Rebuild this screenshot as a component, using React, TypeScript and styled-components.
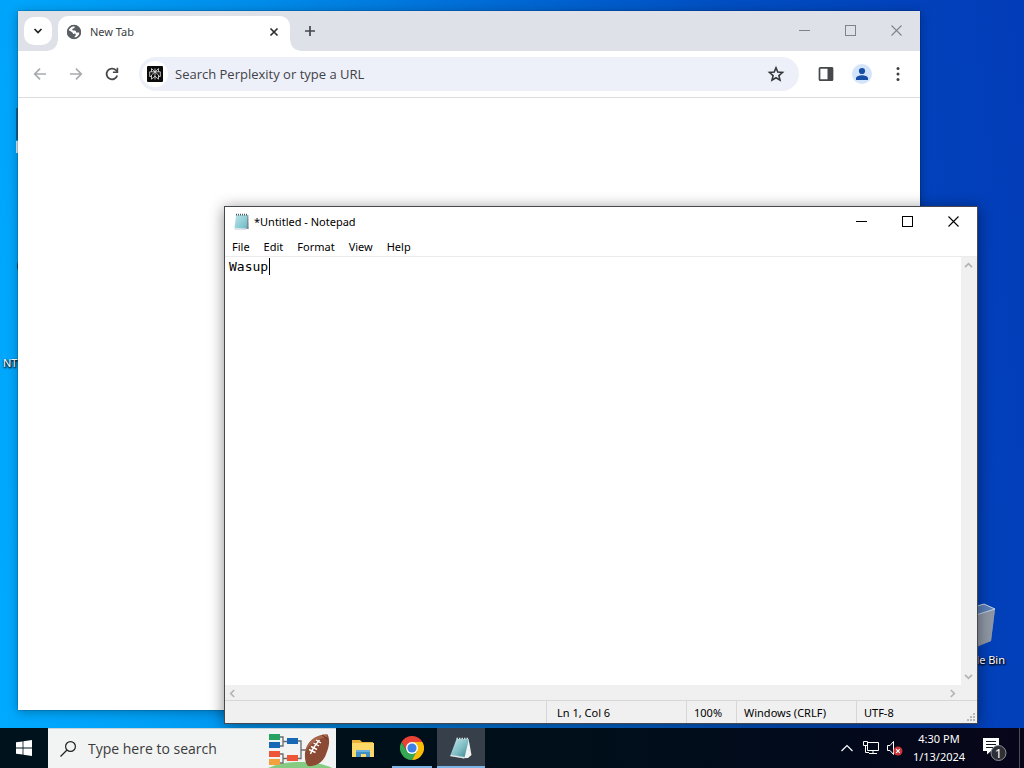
import React from "react";
import styled, { createGlobalStyle } from "styled-components";

const GlobalStyle = createGlobalStyle`
  *, *::before, *::after { box-sizing: border-box; }
  body { margin: 0; font-family: "Noto Sans", "Open Sans", sans-serif; font-size: 11px; color: #000; }
  button, input, textarea { font: inherit; color: inherit; border: 0; padding: 0; margin: 0; background: none; border-radius: 0; }
  button { display: flex; align-items: center; justify-content: center; }
  svg { display: block; flex: none; }
`;

const Screen = styled.div`
  min-height: 100vh;
  display: flex;
  flex-direction: column;
  overflow: hidden;
  background: linear-gradient(84deg, #00aaff 0%, #00a2f8 12%, #008dea 30%, #006dd6 50%, #004fc2 72%, #0241bb 90%, #033cb8 100%);
`;

const Desktop = styled.main`
  flex: 1;
  position: relative;
  overflow: hidden;
`;

const Shortcut = styled.div<{ $top: number; $left?: number; $right?: number }>`
  position: absolute;
  top: ${(p) => p.$top}px;
  ${(p) => (p.$left !== undefined ? `left: ${p.$left}px;` : "")}
  ${(p) => (p.$right !== undefined ? `right: ${p.$right}px;` : "")}
  display: flex;
  flex-direction: column;
  align-items: center;
  gap: 4px;
  color: #fff;
  line-height: 16px;
  text-shadow: 0 1px 2px #000, 1px 1px 2px #000;
`;

const Window = styled.section`
  position: absolute;
  display: flex;
  flex-direction: column;
  background: #fff;
`;

const BrowserWindow = styled(Window)`
  inset: 11px 104px 18px 18px;
  box-shadow: 0 0 1px rgba(0, 0, 0, 0.7), 0 2px 10px rgba(0, 0, 0, 0.3);
`;

const NotepadWindow = styled(Window)`
  inset: 206px 46px 4px 224px;
  border: 1px solid #45494e;
  box-shadow: 0 2px 14px rgba(0, 0, 0, 0.45);
`;

const TabStrip = styled.header`
  height: 40px;
  display: flex;
  align-items: center;
  padding-left: 6px;
  background: #dee2e8;
`;

const TabSearch = styled.button`
  width: 28px;
  height: 28px;
  border-radius: 10px;
  background: #fff;
`;

const Tab = styled.div`
  position: relative;
  align-self: flex-end;
  width: 232px;
  height: 35px;
  margin-left: 6px;
  padding: 0 8px 4px;
  display: flex;
  align-items: center;
  gap: 8px;
  color: #3c4043;
  background: #fff;
  border-radius: 10px 10px 0 0;
  &::before, &::after {
    content: "";
    position: absolute;
    bottom: 0;
    width: 10px;
    height: 10px;
  }
  &::before { left: -10px; background: radial-gradient(circle at 0 0, transparent 9px, #fff 10px); }
  &::after { right: -10px; background: radial-gradient(circle at 100% 0, transparent 9px, #fff 10px); }
`;

const TabTitle = styled.span`
  flex: 1;
`;

const TabButton = styled.button`
  width: 16px;
  height: 16px;
`;

const NewTab = styled.button`
  width: 28px;
  height: 28px;
  margin-left: 6px;
`;

const CaptionButtons = styled.div`
  display: flex;
  align-self: stretch;
  margin-left: auto;
`;

const CaptionButton = styled.button`
  width: 46px;
  padding-right: 1px;
  padding-bottom: 1px;
`;

const Toolbar = styled.div`
  height: 47px;
  display: flex;
  align-items: center;
  padding: 0 4px;
  border-bottom: 1px solid #dcdde1;
  background: #fff;
`;

const ToolButton = styled.button`
  width: 36px;
  height: 36px;
`;

const Omnibox = styled.label`
  flex: 1;
  height: 34px;
  margin: 0 9px;
  padding: 0 14px 0 3px;
  display: flex;
  align-items: center;
  gap: 7px;
  border-radius: 17px;
  background: #eef0f9;
`;

const EngineBadge = styled.span`
  width: 26px;
  height: 26px;
  display: flex;
  align-items: center;
  justify-content: center;
  border-radius: 50%;
  background: #fff;
`;

const OmniInput = styled.input`
  flex: 1;
  min-width: 0;
  height: 26px;
  font-family: "Open Sans", sans-serif;
  font-size: 13px;
  &::placeholder { color: #3f4248; opacity: 1; }
`;

const NotepadTitle = styled.header`
  height: 29px;
  display: flex;
  align-items: center;
  gap: 5px;
  padding-left: 8px;
`;

const MenuBar = styled.nav`
  height: 20px;
  display: flex;
  align-items: center;
`;

const MenuItem = styled.button`
  height: 20px;
  padding: 0 7px;
`;

const EditorArea = styled.div`
  flex: 1;
  display: flex;
  min-height: 0;
  border-top: 1px solid #ebebeb;
  background: #f0f0f0;
`;

const Editor = styled.div`
  flex: 1;
  position: relative;
  display: flex;
  font: 13px/18px "DejaVu Sans Mono", monospace;
  background: #fff;
`;

const TextBox = styled.textarea`
  flex: 1;
  resize: none;
  outline: none;
  padding: 1px 4px 0;
`;

const Caret = styled.span`
  position: absolute;
  top: 1px;
  left: calc(5px + 5ch);
  width: 1px;
  height: 17px;
  background: #000;
`;

const ScrollBar = styled.div<{ $vertical?: boolean }>`
  display: flex;
  justify-content: space-between;
  flex-direction: ${(p) => (p.$vertical ? "column" : "row")};
  ${(p) => (p.$vertical ? "width: 16px; padding-bottom: 1px;" : "height: 15px; padding-right: 17px;")}
  background: #f0f0f0;
`;

const ScrollButton = styled.button`
  width: 15px;
  height: 16px;
`;

const StatusBar = styled.footer`
  position: relative;
  height: 23px;
  display: flex;
  justify-content: flex-end;
  padding-right: 1px;
  border-top: 1px solid #d7d7d7;
  background: #f0f0f0;
`;

const StatusCell = styled.span<{ $width: number; $indent: number }>`
  width: ${(p) => p.$width}px;
  padding-left: ${(p) => p.$indent}px;
  display: flex;
  align-items: center;
  border-left: 1px solid #d7d7d7;
  white-space: nowrap;
`;

const Grip = styled.svg`
  position: absolute;
  right: 1px;
  bottom: 1px;
`;

const Taskbar = styled.footer`
  height: 40px;
  display: flex;
  color: #fff;
  background: linear-gradient(90deg, #00121c 0%, #000f1a 55%, #020a1c 80%, #080519 100%);
`;

const StartButton = styled.button`
  width: 48px;
`;

const SearchBox = styled.label`
  width: 288px;
  margin-right: 3px;
  padding-left: 12px;
  display: flex;
  align-items: center;
  gap: 12px;
  border-top: 1px solid #c9d3da;
  background: #f2f3f3;
`;

const SearchInput = styled.input`
  flex: 1;
  min-width: 0;
  margin-right: -12px;
  height: 30px;
  font-family: "Open Sans", sans-serif;
  font-size: 14px;
  &::placeholder { color: #3b3b3b; opacity: 1; }
`;

const TaskButton = styled.button<{ $running?: boolean; $active?: boolean }>`
  position: relative;
  width: 48px;
  margin-right: 1px;
  background: ${(p) => (p.$active ? "#363f4a" : "none")};
  &::after {
    content: "";
    position: absolute;
    bottom: 0;
    left: ${(p) => (p.$active ? 0 : 4)}px;
    right: ${(p) => (p.$active ? 0 : 4)}px;
    height: 2px;
    background: ${(p) => (p.$running || p.$active ? "#7cb4e6" : "none")};
  }
`;

const Tray = styled.div`
  display: flex;
  margin-left: auto;
  padding-right: 4px;
`;

const TrayButton = styled.button`
  width: 24px;
`;

const Clock = styled.button`
  width: 64px;
  flex-direction: column;
  line-height: 18px;
  white-space: nowrap;
`;

const NoticeButton = styled.button`
  width: 49px;
  border-right: 1px solid #4a4d58;
`;

const MinimizeIcon = () => (
  <svg width="11" height="11" viewBox="0 0 11 11"><path d="M0 5.5h11" stroke="currentColor" /></svg>
);
const MaximizeIcon = () => (
  <svg width="11" height="11" viewBox="0 0 11 11"><rect x=".5" y=".5" width="10" height="10" fill="none" stroke="currentColor" /></svg>
);
const CloseIcon = () => (
  <svg width="11" height="11" viewBox="0 0 11 11"><path d="M.5.5l10 10M10.5.5l-10 10" stroke="currentColor" strokeWidth="1.1" /></svg>
);

const BrowserCaptions = styled(CaptionButtons)`
  color: #808388;
`;

const Captions = ({ as: Group = CaptionButtons }: { as?: React.ElementType }) => (
  <Group>
    <CaptionButton aria-label="Minimize"><MinimizeIcon /></CaptionButton>
    <CaptionButton aria-label="Maximize"><MaximizeIcon /></CaptionButton>
    <CaptionButton aria-label="Close"><CloseIcon /></CaptionButton>
  </Group>
);

const turns = { up: 0, right: 90, down: 180, left: 270 };
const ScrollArrow = ({ dir }: { dir: keyof typeof turns }) => (
  <svg width="9" height="9" viewBox="0 0 9 9">
    <path d="M1 6.2L4.5 2.7 8 6.2" transform={`rotate(${turns[dir]} 4.5 4.5)`} fill="none" stroke="#b4b4b4" strokeWidth="1.7" />
  </svg>
);

const Arrow = ({ flip }: { flip?: boolean }) => (
  <svg width="16" height="16" viewBox="0 0 16 16">
    <path d="M14 8H3M8 2.7L2.7 8 8 13.3" transform={flip ? "rotate(180 8 8)" : undefined} fill="none" stroke="#a9abae" strokeWidth="1.7" />
  </svg>
);

const ReloadIcon = () => (
  <svg width="16" height="16" viewBox="0 0 16 16">
    <path d="M13.2 9.4A5.4 5.4 0 1 1 11.9 4.2L13.6 6" fill="none" stroke="#46484c" strokeWidth="1.8" />
    <path d="M14.2 1.8v5.3H8.9V5.5h3.7V1.8z" fill="#46484c" />
  </svg>
);

const GlobeIcon = () => (
  <svg width="16" height="16" viewBox="0 0 16 16">
    <circle cx="8" cy="8" r="7" fill="#5b5f64" />
    <path d="M8.4 2.1c.6 1.1.2 1.9-.6 2.2-.9.3-1.6.6-1.5 1.4.1 1 1.4.8 2.4.9 1.1.2 1.5.9 1.4 1.9 1 .1 2.2-.1 3.4.2A5.7 5.7 0 0 1 8.6 13.8c-.2-1 .1-1.6.8-2 .6-.5.6-1.7-.3-2-.9-.4-1.8-.3-2.5-1C5.5 7.7 4 6.9 2.6 6.3 3.5 3.7 5.7 2.2 8.4 2.1z" fill="#fff" />
    <circle cx="8" cy="8" r="6.4" fill="none" stroke="#5b5f64" strokeWidth="1.5" />
  </svg>
);

const PerplexityIcon = () => (
  <svg width="16" height="16" viewBox="0 0 16 16">
    <rect width="16" height="16" rx="1" fill="#0b0b0b" />
    <path d="M8 2.5v11M4.5 2.5L8 5.8l3.5-3.3v3.3h-7zM4.5 5.8H2.7v4.7h1.8M11.5 5.8h1.8v4.7h-1.8M8 5.8L4.5 9v4.2L8 10.2l3.500 3V9z" fill="none" stroke="#e8e8e8" strokeWidth=".8" />
  </svg>
);

const StarIcon = () => (
  <svg width="18" height="18" viewBox="0 0 18 18">
    <path d="M9 2.8l1.800 4.300 4.700.4-3.600 3.100 1.100 4.500L9 12.700l-4 2.400 1.100-4.500L2.500 7.500l4.700-.4z" fill="none" stroke="#35373a" strokeWidth="1.600" />
  </svg>
);

const SidePanelIcon = () => (
  <svg width="16" height="16" viewBox="0 0 16 16">
    <rect x="1.500" y="1.800" width="13" height="12.400" rx=".8" fill="none" stroke="#46484c" strokeWidth="1.700" />
    <path d="M9.500 1.500H15v13H9.500z" fill="#46484c" />
  </svg>
);

const ProfileIcon = () => (
  <svg width="20" height="20" viewBox="0 0 20 20">
    <circle cx="10" cy="10" r="10" fill="#d4e4fa" />
    <circle cx="10" cy="7" r="3.100" fill="#174ea6" />
    <path d="M4 16v-1.700c0-2.100 3.500-3.100 6-3.100s6 1 6 3.100V16z" fill="#174ea6" />
  </svg>
);

const DotsIcon = () => (
  <svg width="4" height="16" viewBox="0 0 4 16" fill="#3f4145">
    <circle cx="2" cy="2.500" r="1.500" /><circle cx="2" cy="8" r="1.500" /><circle cx="2" cy="13.500" r="1.500" />
  </svg>
);

const NotepadIcon = () => (
  <svg width="16" height="18" viewBox="0 0 16 18">
    <defs>
      <linearGradient id="pad" x1="0" y1="0" x2="1" y2="1">
        <stop offset="0" stopColor="#bfe6ea" /><stop offset="1" stopColor="#69b9c6" />
      </linearGradient>
    </defs>
    <path d="M4 2h11.300l.4 14H3z" fill="#7d898d" />
    <path d="M3 2h11.500L13.500 16l-12-.7z" fill="url(#pad)" />
    <path d="M1.500 14.800l12 .7-.1 1.600H1.500z" fill="#dbe6e8" />
    <path d="M3 1.700h12" stroke="#48575c" strokeWidth="1.800" strokeDasharray="1 1" />
  </svg>
);

const NotepadTaskIcon = () => (
  <svg width="24" height="24" viewBox="0 0 24 24">
    <defs>
      <linearGradient id="padTask" x1="0" y1="0" x2="1" y2="1">
        <stop offset="0" stopColor="#c5e9ec" /><stop offset=".55" stopColor="#7dbbc3" /><stop offset="1" stopColor="#347f8a" />
      </linearGradient>
    </defs>
    <path d="M19.500 2.500L22.500 19l-3.500 3-5 .3z" fill="#eef2f2" />
    <path d="M7.500 3H20l-4.500 18.500-14-2.500z" fill="url(#padTask)" />
    <path d="M1.500 18.800l14 2.200-.4 1.500-13.800-2.300z" fill="#dfe9ea" />
    <path d="M7.500 2.500H20" stroke="#d4dfe1" strokeWidth="1.500" strokeDasharray="1.500 1" />
  </svg>
);

const SearchHighlight = () => (
  <svg width="68" height="38" viewBox="0 0 68 38">
    <path d="M0 38c7-3 17-6 29-6 15 0 28 2 35 6z" fill="#85cc82" />
    <path d="M11 7h4v9h-4M15 11.500h4M11 24h4v9h-4M15 28.500h4M29 11h4v17.500h-4M33 20h6" fill="none" stroke="#676b70" strokeWidth="1.300" />
    <rect x="1" y="4" width="11" height="6" fill="#27a361" />
    <rect x="1" y="12" width="11" height="6" fill="#1769b5" />
    <rect x="1" y="21" width="11" height="6" fill="#ee5638" />
    <rect x="1" y="29" width="11" height="6" fill="#f3a13c" />
    <rect x="19" y="8" width="11" height="6" fill="#1769b5" />
    <rect x="19" y="25" width="11" height="6" fill="#ee5638" />
    <path d="M59.500 4.500C48 4 38 12 37 23c-.4 6 .5 10.500 3 13 8 1 16-4 18.500-13C61.500 16 62 9 59.500 4.500z" fill="#8a4a34" />
    <path d="M59.500 4.500C48 4 38 12 37 23c3-7 10-14 22-16z" fill="#a9664b" />
    <path d="M42.500 24c2-6 5-9 9-14M41 19.500l6.500 3M43 16.500l6 3M45.500 13l5.500 3M48 10l5 3" fill="none" stroke="#fff" strokeWidth="1.400" />
    <path d="M54 5.500c2 .5 4 2 5.500 4" stroke="#5f3124" fill="none" />
  </svg>
);

const FolderIcon = () => (
  <svg width="22" height="19" viewBox="0 0 22 19">
    <path d="M0 1h8l2 2h11v3H0z" fill="#e9b03a" />
    <path d="M0 4h22v14H0z" fill="#fbd867" />
    <path d="M4 11h14v7h-4v-3H9v3H4z" fill="#3f8fc8" />
    <path d="M4 11h14v2H4z" fill="#69aede" />
  </svg>
);

const ChromeIcon = () => (
  <svg width="24" height="24" viewBox="0 0 24 24">
    <path d="M12 6h10.400A12 12 0 0 0 1.600 6l5.200 9z" fill="#e94235" />
    <path d="M17.200 9L12 24A12 12 0 0 0 22.400 6H12z" fill="#fbbc05" />
    <path d="M6.800 15L1.600 6A12 12 0 0 0 12 24l5.200-9z" fill="#34a853" />
    <circle cx="12" cy="12" r="6" fill="#fff" />
    <circle cx="12" cy="12" r="4.600" fill="#3f7fe8" />
  </svg>
);

const NetworkIcon = () => (
  <svg width="18" height="16" viewBox="0 0 18 16" fill="none" stroke="#fff">
    <path d="M5.500 2.500h11v8h-11zM11 10.500v3M7 13.500h8M1.500 1.500h4v4h-4zM3.500 5.500v7H7" />
  </svg>
);

const VolumeIcon = () => (
  <svg width="18" height="16" viewBox="0 0 18 16">
    <path d="M1.500 5.500H4l3.500-4v13l-3.500-4H1.500z" fill="none" stroke="#fff" />
    <circle cx="12" cy="11" r="4.500" fill="#cb3338" />
    <path d="M10.200 9.200l3.600 3.600M13.800 9.200l-3.600 3.600" stroke="#fff" strokeWidth="1.200" />
  </svg>
);

const NoticeIcon = () => (
  <svg width="26" height="26" viewBox="0 0 26 26">
    <path d="M1 3h16v13H9l-4 3.500V16H1z" fill="#fff" />
    <path d="M4 6.500h10M4 9.500h10M4 12.500h7" stroke="#111722" />
    <circle cx="16.500" cy="18" r="7.500" fill="#2d3035" stroke="#8c8f94" />
    <text x="16.500" y="23" textAnchor="middle" fontSize="13" fill="#fff">1</text>
  </svg>
);

export default function App() {
  return (
    <Screen>
      <GlobalStyle />
      <Desktop>
        <Shortcut $top={108} $left={16}>
          <svg width="34" height="46"><path d="M0 0h34v32H0z" fill="#126292" /><path d="M0 33h34v12H0z" fill="#d9edfb" /></svg>
        </Shortcut>
        <Shortcut $top={256} $left={17}>
          <svg width="20" height="20"><circle cx="10" cy="10" r="10" fill="#15364c" /></svg>
        </Shortcut>
        <Shortcut $top={355} $left={3}>NT</Shortcut>
        <Shortcut $top={602} $right={19}>
          <svg width="40" height="46" viewBox="0 0 40 46">
            <path d="M1 10L28 2l11 5-4 32-14 6H6z" fill="#7d8ba4" />
            <path d="M20 13l19-6-4 32-14 5z" fill="#8f97a5" />
            <path d="M1 10L28 2l11 5-19 6z" fill="#5b7fb8" stroke="#c5d2e4" />
          </svg>
          Recycle Bin
        </Shortcut>

        <BrowserWindow aria-label="Browser">
          <TabStrip>
            <TabSearch aria-label="Search tabs">
              <svg width="10" height="10" viewBox="0 0 10 10"><path d="M1.500 3L5 6.500 8.500 3" fill="none" stroke="#1f2124" strokeWidth="1.700" /></svg>
            </TabSearch>
            <Tab>
              <GlobeIcon />
              <TabTitle>New Tab</TabTitle>
              <TabButton aria-label="Close tab">
                <svg width="10" height="10" viewBox="0 0 10 10"><path d="M1.500 1.500l7 7M8.500 1.500l-7 7" stroke="#2c2e31" strokeWidth="1.700" /></svg>
              </TabButton>
            </Tab>
            <NewTab aria-label="New tab">
              <svg width="12" height="12" viewBox="0 0 12 12"><path d="M6 1v10M1 6h10" stroke="#45474b" strokeWidth="1.700" /></svg>
            </NewTab>
            <Captions as={BrowserCaptions} />
          </TabStrip>
          <Toolbar>
            <ToolButton aria-label="Back"><Arrow /></ToolButton>
            <ToolButton aria-label="Forward"><Arrow flip /></ToolButton>
            <ToolButton aria-label="Reload"><ReloadIcon /></ToolButton>
            <Omnibox>
              <EngineBadge><PerplexityIcon /></EngineBadge>
              <OmniInput aria-label="Address" placeholder="Search Perplexity or type a URL" />
              <StarIcon />
            </Omnibox>
            <ToolButton aria-label="Side panel"><SidePanelIcon /></ToolButton>
            <ToolButton aria-label="Profile"><ProfileIcon /></ToolButton>
            <ToolButton aria-label="Menu"><DotsIcon /></ToolButton>
          </Toolbar>
        </BrowserWindow>

        <NotepadWindow aria-label="Notepad">
          <NotepadTitle>
            <NotepadIcon />
            <span>*Untitled - Notepad</span>
            <Captions />
          </NotepadTitle>
          <MenuBar>
            {["File", "Edit", "Format", "View", "Help"].map((m) => <MenuItem key={m}>{m}</MenuItem>)}
          </MenuBar>
          <EditorArea>
            <Editor>
              <TextBox aria-label="Document text" defaultValue="Wasup" spellCheck={false} />
              <Caret />
            </Editor>
            <ScrollBar $vertical>
              <ScrollButton aria-label="Scroll up"><ScrollArrow dir="up" /></ScrollButton>
              <ScrollButton aria-label="Scroll down"><ScrollArrow dir="down" /></ScrollButton>
            </ScrollBar>
          </EditorArea>
          <ScrollBar>
            <ScrollButton aria-label="Scroll left"><ScrollArrow dir="left" /></ScrollButton>
            <ScrollButton aria-label="Scroll right"><ScrollArrow dir="right" /></ScrollButton>
          </ScrollBar>
          <StatusBar>
            <StatusCell $width={140} $indent={10}>Ln 1, Col 6</StatusCell>
            <StatusCell $width={50} $indent={7}>100%</StatusCell>
            <StatusCell $width={120} $indent={7}>Windows (CRLF)</StatusCell>
            <StatusCell $width={120} $indent={7}>UTF-8</StatusCell>
            <Grip width="9" height="9" viewBox="0 0 9 9" fill="#b8b8b8">
              <path d="M6 0h2v2H6zM3 3h2v2H3zM6 3h2v2H6zM0 6h2v2H0zM3 6h2v2H3zM6 6h2v2H6z" />
            </Grip>
          </StatusBar>
        </NotepadWindow>
      </Desktop>

      <Taskbar>
        <StartButton aria-label="Start">
          <svg width="16" height="16" viewBox="0 0 16 16" fill="#fff">
            <path d="M0 2.300l6.600-.9v6.200H0zM7.400 1.300L16 0v7.600H7.400zM0 8.400h6.600v6.200L0 13.700zM7.400 8.400H16V16l-8.600-1.300z" />
          </svg>
        </StartButton>
        <SearchBox>
          <svg width="16" height="16" viewBox="0 0 16 16" fill="none" stroke="#222" strokeWidth="1.200">
            <circle cx="10.500" cy="5.500" r="4.900" /><path d="M7 9L.5 15.500" />
          </svg>
          <SearchInput aria-label="Search" placeholder="Type here to search" />
          <SearchHighlight />
        </SearchBox>
        <TaskButton aria-label="File Explorer"><FolderIcon /></TaskButton>
        <TaskButton aria-label="Chrome" $running><ChromeIcon /></TaskButton>
        <TaskButton aria-label="Notepad" $active><NotepadTaskIcon /></TaskButton>
        <Tray>
          <TrayButton aria-label="Show hidden icons">
            <svg width="12" height="8" viewBox="0 0 12 8"><path d="M.5 7L6 1.500 11.500 7" fill="none" stroke="#fff" strokeWidth="1.200" /></svg>
          </TrayButton>
          <TrayButton aria-label="Network"><NetworkIcon /></TrayButton>
          <TrayButton aria-label="Volume"><VolumeIcon /></TrayButton>
          <Clock><span>4:30 PM</span><span>1/13/2024</span></Clock>
          <NoticeButton aria-label="Notifications"><NoticeIcon /></NoticeButton>
        </Tray>
      </Taskbar>
    </Screen>
  );
}
